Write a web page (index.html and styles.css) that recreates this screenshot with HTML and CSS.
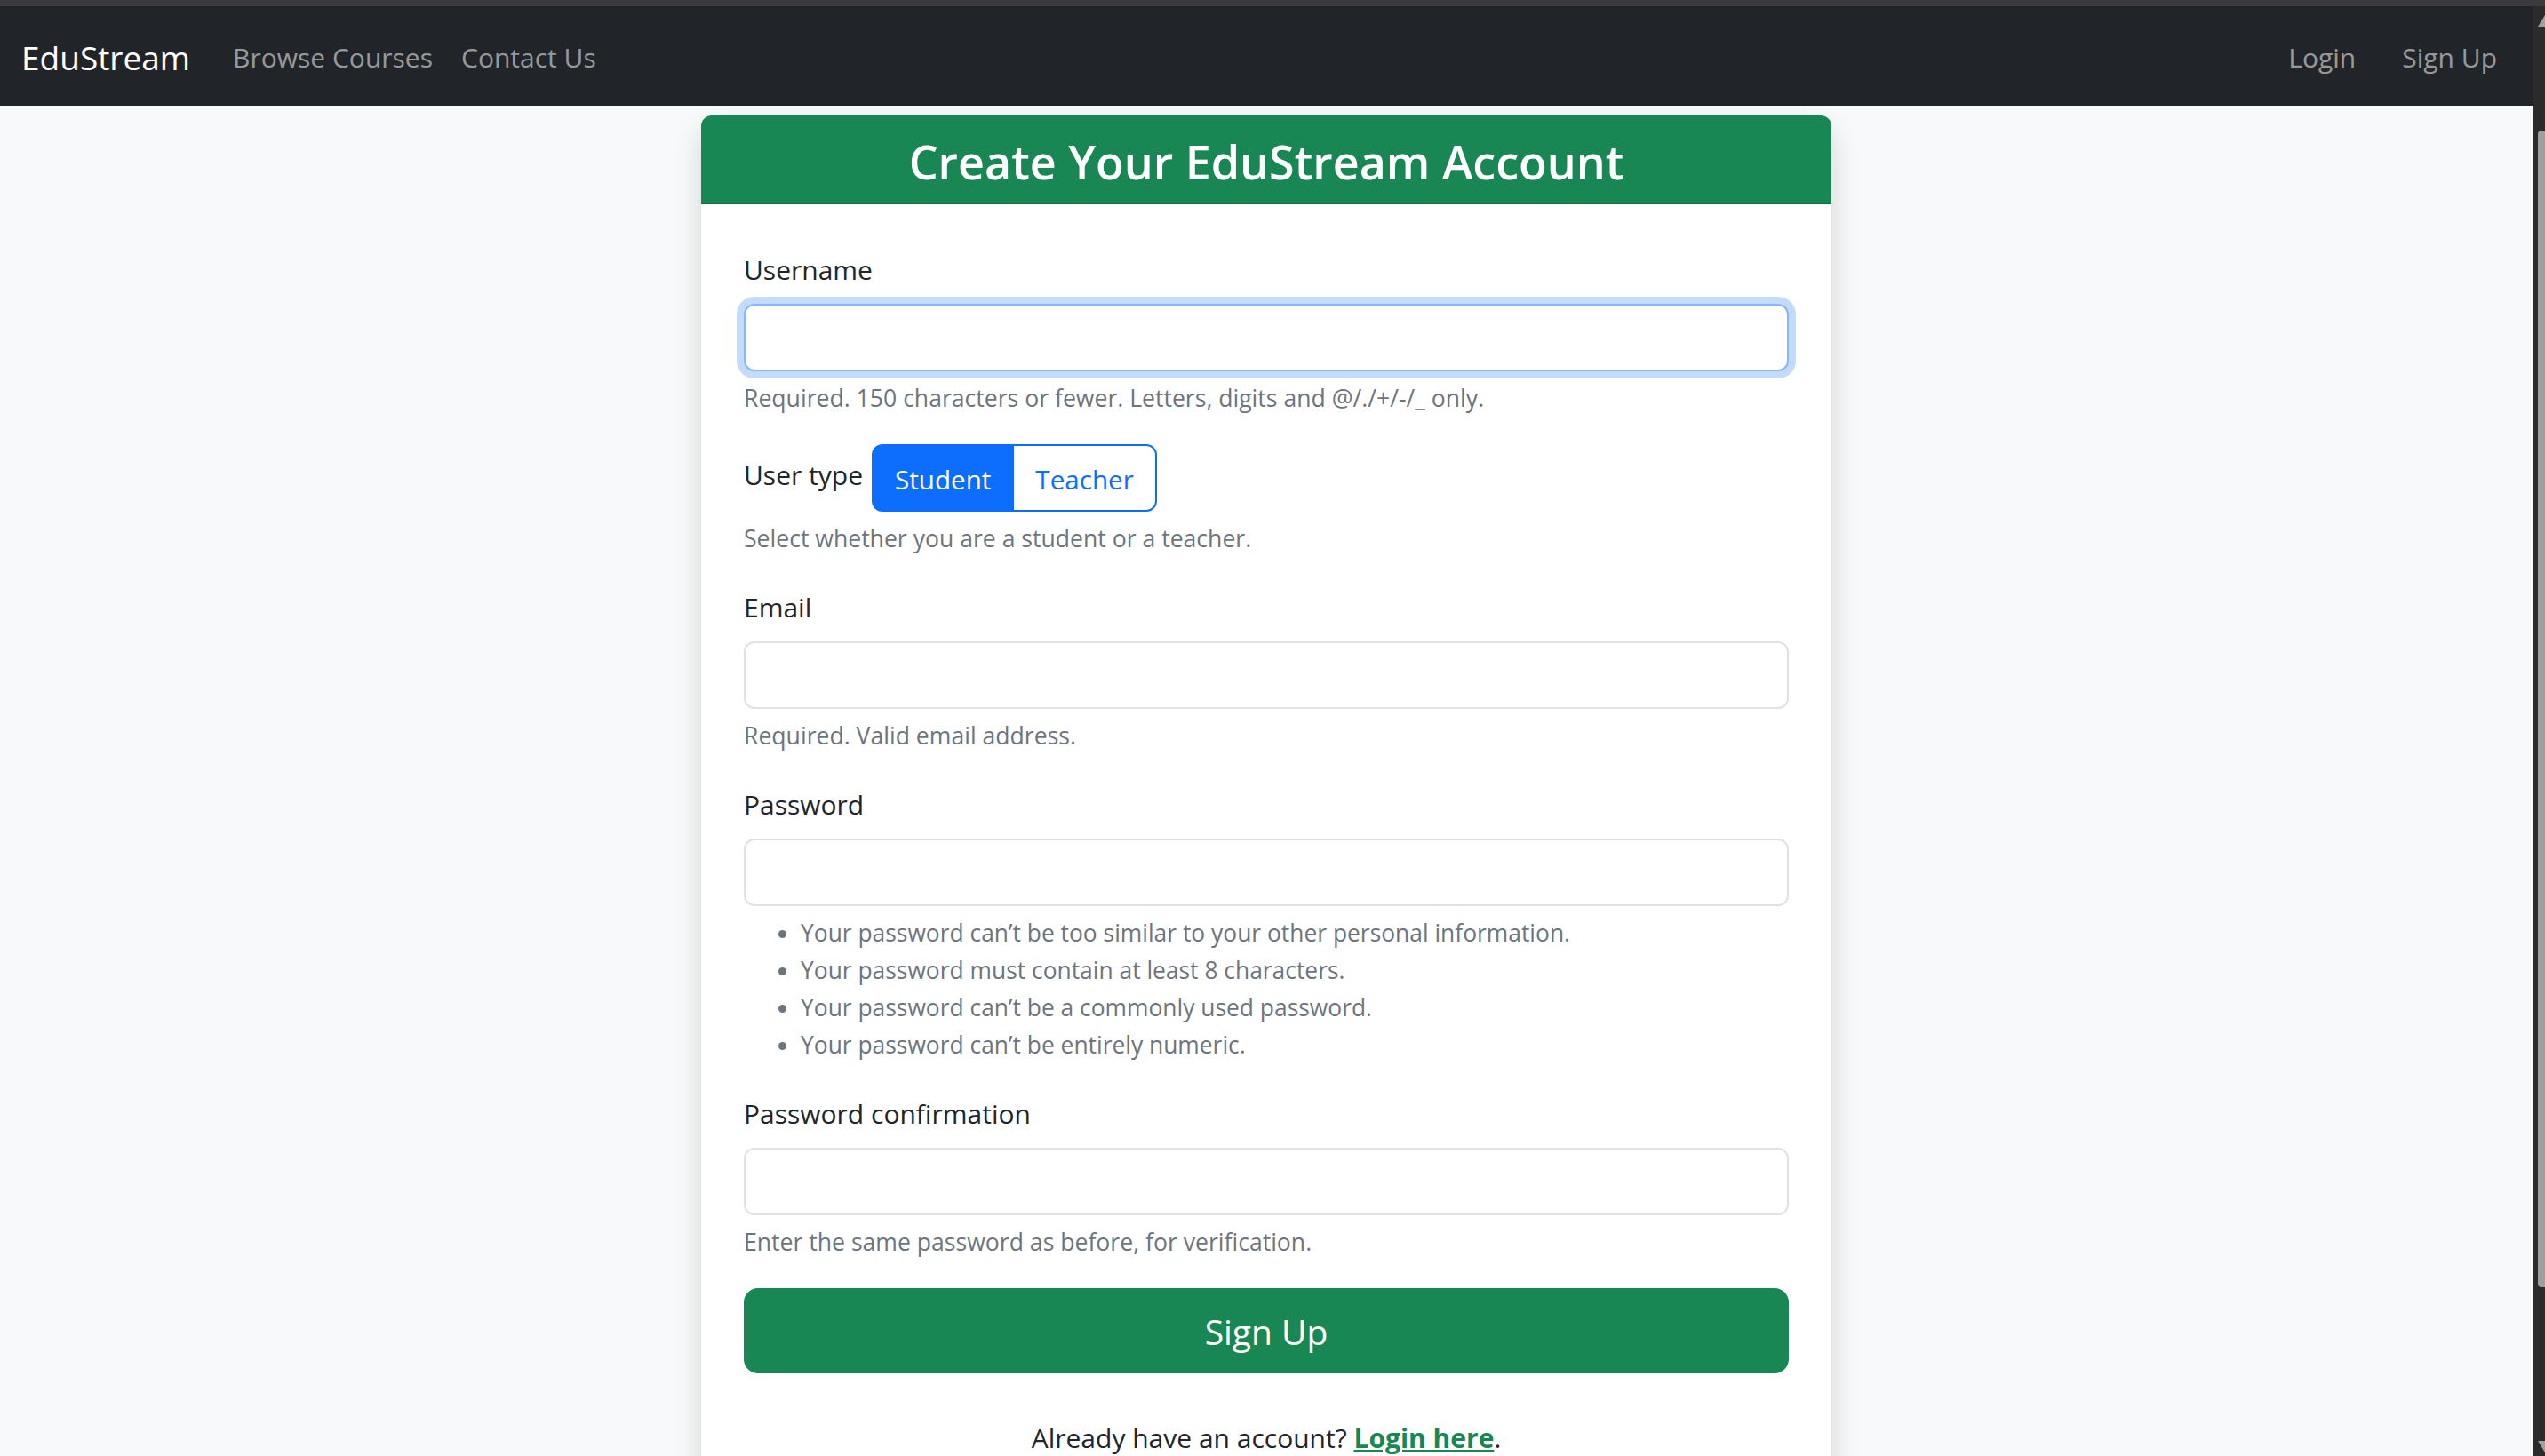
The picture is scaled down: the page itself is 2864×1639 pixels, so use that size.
FILE: index.html
```html
<!DOCTYPE html>
<html lang="en">
<head>
<meta charset="utf-8">
<title>Sign Up - EduStream</title>
<link rel="stylesheet" href="styles.css">
</head>
<body>
<div class="window-strip"></div>
<div class="window">
  <div class="viewport">
    <nav class="navbar">
      <a class="brand" href="#">EduStream</a>
      <ul class="nav">
        <li><a class="nav-link" href="#">Browse Courses</a></li>
        <li><a class="nav-link" href="#">Contact Us</a></li>
      </ul>
      <ul class="nav nav-right">
        <li><a class="nav-link" href="#">Login</a></li>
        <li><a class="nav-link" href="#">Sign Up</a></li>
      </ul>
    </nav>
    <main class="page">
      <div class="card">
        <div class="card-header">
          <h3 class="card-title">Create Your EduStream Account</h3>
        </div>
        <div class="card-body">
          <form class="signup-form">
            <div class="field">
              <label class="form-label" for="id_username">Username</label>
              <input class="form-control is-focused" id="id_username" type="text">
              <div class="form-text">Required. 150 characters or fewer. Letters, digits and @/./+/-/_ only.</div>
            </div>
            <div class="field">
              <div class="choice-row">
                <span class="form-label choice-label">User type</span>
                <div class="btn-group">
                  <button type="button" class="btn btn-active">Student</button>
                  <button type="button" class="btn btn-outline">Teacher</button>
                </div>
              </div>
              <div class="form-text">Select whether you are a student or a teacher.</div>
            </div>
            <div class="field">
              <label class="form-label" for="id_email">Email</label>
              <input class="form-control" id="id_email" type="email">
              <div class="form-text">Required. Valid email address.</div>
            </div>
            <div class="field">
              <label class="form-label" for="id_password1">Password</label>
              <input class="form-control" id="id_password1" type="password">
              <div class="form-text">
                <ul class="rules">
                  <li>Your password can’t be too similar to your other personal information.</li>
                  <li>Your password must contain at least 8 characters.</li>
                  <li>Your password can’t be a commonly used password.</li>
                  <li>Your password can’t be entirely numeric.</li>
                </ul>
              </div>
            </div>
            <div class="field">
              <label class="form-label" for="id_password2">Password confirmation</label>
              <input class="form-control" id="id_password2" type="password">
              <div class="form-text">Enter the same password as before, for verification.</div>
            </div>
            <button type="submit" class="btn-submit">Sign Up</button>
          </form>
          <p class="login-prompt">Already have an account? <a class="login-link" href="#">Login here</a>.</p>
        </div>
      </div>
    </main>
  </div>
  <div class="scrollbar">
    <svg class="scrollbar-svg" width="14" height="1632" viewBox="0 0 14 1632">
      <rect x="0" y="0" width="14" height="1632" fill="#2b2b2b"/>
      <polygon points="6,23 14,10 14,23" fill="#a0a0a0"/>
      <path d="M10,140 H14 V1442 H10 Q6,1442 6,1438 V144 Q6,140 10,140 Z" fill="#9f9f9f"/>
      <polygon points="6,1615 14,1615 14,1628" fill="#a0a0a0"/>
    </svg>
  </div>
</div>
</body>
</html>
```

FILE: styles.css
```css
* {
  box-sizing: border-box;
}

html,
body {
  margin: 0;
  padding: 0;
  width: 2864px;
  height: 1639px;
  overflow: hidden;
  background: #2b2b2b;
  font-family: "Open Sans", "Noto Sans", sans-serif;
  color: #212529;
}

.window-strip {
  height: 7px;
  background: #3b3a3f;
}

.window {
  display: flex;
  height: 1632px;
}

.viewport {
  flex: 1;
  height: 1632px;
  overflow: hidden;
  background: #f8f9fa;
}

.scrollbar {
  width: 14px;
  flex: none;
  height: 1632px;
}

.scrollbar-svg {
  display: block;
}

/* Navbar */
.navbar {
  display: flex;
  align-items: center;
  height: 112px;
  padding: 16px 24px;
  background: #212529;
}

.brand {
  font-size: 37px;
  line-height: 60px;
  padding: 12px 0 8px;
  margin-right: 32px;
  color: #ffffff;
  text-decoration: none;
}

.nav {
  display: flex;
  list-style: none;
  margin: 0;
  padding: 0;
}

.nav-right {
  margin-left: auto;
}

.nav-right li + li {
  margin-left: 20px;
}

.nav-link {
  display: block;
  padding: 18px 16px 14px;
  font-size: 30px;
  line-height: 48px;
  color: rgba(255, 255, 255, 0.55);
  text-decoration: none;
}

/* Page */
.page {
  display: flex;
  justify-content: center;
  padding-top: 11px;
}

.card {
  width: 1272px;
  background: #ffffff;
  border-radius: 12px;
  box-shadow: 0 16px 32px rgba(0, 0, 0, 0.15);
  overflow: hidden;
  flex: none;
}

.card-header {
  height: 100px;
  padding: 19px 32px 13px;
  background: #198754;
  border-bottom: 2px solid rgba(0, 0, 0, 0.175);
}

.card-title {
  margin: 0;
  text-align: center;
  color: #ffffff;
  font-size: 52px;
  line-height: 66px;
  font-weight: 600;
}

.card-body {
  padding: 48px;
}

.signup-form {
  margin: 0;
}

.field {
  margin-bottom: 32px;
}

.form-label {
  display: block;
  font-size: 30px;
  line-height: 48px;
  padding-top: 2px;
  margin-bottom: 14px;
  color: #212529;
}

.form-control {
  display: block;
  width: 100%;
  height: 76px;
  margin: 0;
  padding: 12px 24px;
  font-family: inherit;
  font-size: 30px;
  line-height: 48px;
  color: #212529;
  background: #ffffff;
  border: 2px solid #dee2e6;
  border-radius: 12px;
  outline: none;
}

.form-control.is-focused {
  border-color: #86b7fe;
  box-shadow: 0 0 0 8px rgba(13, 110, 253, 0.25);
}

.form-text {
  margin-top: 9px;
  margin-bottom: -1px;
  font-size: 26.6px;
  line-height: 42px;
  color: #6c757d;
}

.rules {
  margin: 0;
  padding-left: 64px;
  font-size: 26.4px;
}

.choice-row {
  display: flex;
  align-items: flex-start;
}

.choice-label {
  margin: 9px 10px 0 0;
}

.btn-group {
  display: flex;
}

.btn {
  height: 76px;
  margin: 0;
  padding: 14px 24px 10px;
  font-family: inherit;
  font-size: 29.6px;
  line-height: 48px;
  border: 2px solid #0d6efd;
  cursor: pointer;
}

.btn-active {
  background: #0d6efd;
  color: #ffffff;
  border-radius: 12px 0 0 12px;
}

.btn-outline {
  background: #ffffff;
  color: #0d6efd;
  border-radius: 0 12px 12px 0;
  margin-left: -2px;
}

.btn-submit {
  display: block;
  width: 100%;
  height: 96px;
  margin: 0;
  padding: 17px 32px 15px;
  font-family: inherit;
  font-size: 39px;
  line-height: 60px;
  color: #ffffff;
  background: #198754;
  border: 2px solid #198754;
  border-radius: 16px;
  cursor: pointer;
}

.login-prompt {
  margin: 49px 0 0;
  text-align: center;
  font-size: 30px;
  line-height: 48px;
  color: #212529;
}

.login-link {
  color: #198754;
  font-weight: 700;
  text-decoration: underline;
}
```
